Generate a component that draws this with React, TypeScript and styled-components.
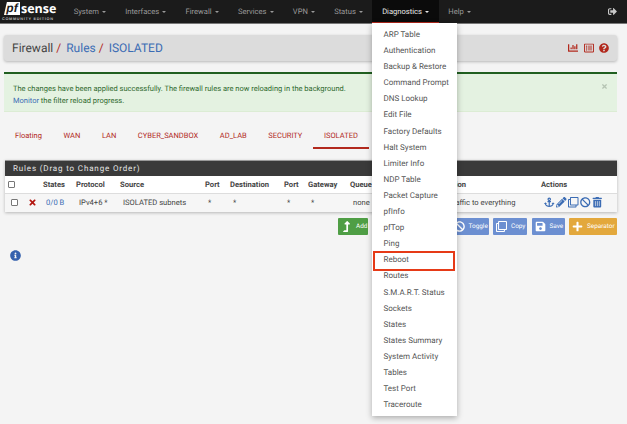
import React from "react";
import styled, { createGlobalStyle } from "styled-components";
import {
  FaAnchor,
  FaBan,
  FaChartBar,
  FaInfoCircle,
  FaPencilAlt,
  FaPlus,
  FaQuestionCircle,
  FaRegClone,
  FaRegListAlt,
  FaSave,
  FaSignOutAlt,
  FaTimes,
  FaTrashAlt,
  FaLevelUpAlt,
} from "react-icons/fa";

const RED = "#b2291d";
const BLUE = "#3b6cb4";

const GlobalStyle = createGlobalStyle`
  html, body {
    margin: 0;
    padding: 0;
    width: 627px;
    height: 424px;
    overflow: hidden;
    background: #f4f4f4;
    font-family: Roboto, "Liberation Sans", sans-serif;
    font-size: 8px;
    color: #444;
    text-rendering: geometricPrecision;
  }
  * { box-sizing: border-box; }
`;

const Navbar = styled.nav`
  height: 24px;
  background: #1b1b1b;
  border-bottom: 1px solid #777;
  display: flex;
  align-items: stretch;
  position: relative;
  z-index: 5;
`;

const Logo = styled.div`
  width: 64px;
  padding: 2px 0 0 2px;
  color: #fff;
`;

const LogoTop = styled.div`
  display: flex;
  align-items: center;
  height: 13px;
`;

const LogoPf = styled.span`
  background: #fff;
  color: #1b1b1b;
  font: italic 700 12px/13px "Liberation Sans", sans-serif;
  width: 16px;
  height: 13px;
  margin-left: 2px;
  text-align: center;
  clip-path: polygon(18% 0, 100% 0, 100% 100%, 0 100%);
`;

const LogoSense = styled.span`
  font: 700 12.5px/13px "Open Sans", sans-serif;
  margin-left: 1px;
`;

const LogoEdition = styled.div`
  font: 700 3.8px/5px "Liberation Sans", sans-serif;
  letter-spacing: 0.7px;
  color: #bbb;
  white-space: nowrap;
  margin-top: 2px;
`;

const NavList = styled.div`
  display: flex;
  flex: 1;
`;

const NavItem = styled.div<{ $active?: boolean }>`
  position: relative;
  padding: 0 9.65px;
  height: ${(p) => (p.$active ? "24px" : "23px")};
  display: flex;
  align-items: center;
  gap: 3px;
  color: ${(p) => (p.$active ? "#e8e8e8" : "#9a9a9a")};
  background: ${(p) => (p.$active ? "#0b0b0b" : "transparent")};
  border-bottom: ${(p) => (p.$active ? `2px solid ${RED}` : "none")};
  font-size: 7.6px;
  white-space: nowrap;
`;

const Caret = styled.span`
  width: 0;
  height: 0;
  margin-top: 1px;
  border-left: 2px solid transparent;
  border-right: 2px solid transparent;
  border-top: 2px solid currentColor;
`;

const LogoutIcon = styled.div`
  margin-left: auto;
  padding: 0 10px 0 0;
  display: flex;
  align-items: center;
  font-size: 9px;
  color: #c8c8c8;
`;

const Dropdown = styled.div`
  position: absolute;
  top: 23px;
  left: 0;
  width: 85px;
  height: 393px;
  padding-top: 4px;
  background: #fff;
  box-shadow: 0 2px 6px rgba(0, 0, 0, 0.3);
`;

const DropdownItem = styled.div`
  position: relative;
  height: 16.1px;
  padding-left: 11px;
  line-height: 16px;
  font-size: 8px;
  color: #555;
`;

const Highlight = styled.span`
  position: absolute;
  left: 1px;
  right: 2px;
  top: -1.5px;
  height: 20px;
  border: 2.5px solid #e63a17;
`;

const Page = styled.main`
  padding: 11px 10px 0 4px;
`;

const Breadcrumb = styled.header`
  height: 26px;
  padding: 0 8px;
  border-radius: 3px;
  background: #dcdcdc;
  box-shadow: 0 1px 3px rgba(0, 0, 0, 0.25);
  display: flex;
  align-items: center;
  font-size: 12px;
`;

const Crumb = styled.span<{ $link?: boolean }>`
  color: ${(p) => (p.$link ? BLUE : "#444")};
`;

const Slash = styled.span`
  color: ${RED};
  margin: 0 5px 0 3px;
`;

const CrumbIcons = styled.div`
  margin-left: auto;
  display: flex;
  align-items: center;
  gap: 5.5px;
  color: ${RED};
  font-size: 10px;
`;

const Alert = styled.section`
  margin-top: 11px;
  height: 40px;
  padding: 9px 9px 0 9px;
  background: #e4f2e1;
  border-top: 2px solid #205f20;
  border-bottom: 1px solid #dcecd4;
  color: #2f6a2f;
  font-size: 7.5px;
  line-height: 11.5px;
  display: flex;
  justify-content: space-between;
`;

const AlertLink = styled.span`
  color: ${BLUE};
`;

const AlertClose = styled.span`
  color: #b5c4b3;
  font-size: 7px;
`;

const Tabs = styled.div`
  display: flex;
  margin-top: 13px;
  height: 24px;
  padding-left: 0.2px;
`;

const Tab = styled.div<{ $active?: boolean }>`
  padding: 0 10.8px;
  line-height: 21px;
  font-size: 7.5px;
  color: ${RED};
  border-bottom: ${(p) => (p.$active ? `2px solid ${RED}` : "none")};
  height: 24px;
`;

const Panel = styled.section`
  margin-top: 11px;
  margin-left: 1px;
  background: #fff;
  border-top: 1px solid #999;
  box-shadow: 0 1px 3px rgba(0, 0, 0, 0.25);
`;

const PanelTitle = styled.h2`
  margin: 0;
  height: 15px;
  padding-left: 8px;
  background: #3a3a3a;
  color: #e4e4e4;
  font-size: 8px;
  font-weight: 400;
  letter-spacing: 0.85px;
  line-height: 15px;
`;

const gridColumns = "20px 15px 33px 44px 85px 25px 54px 24px 42px 38px 39px 114px 1fr";

const HeadRow = styled.div`
  display: grid;
  grid-template-columns: ${gridColumns};
  height: 17.5px;
  padding-left: 3px;
  align-items: center;
  background: #fff;
  border-bottom: 1px solid #ddd;
  font-size: 7.6px;
  font-weight: 700;
  color: #444;
  white-space: nowrap;
`;

const BodyRow = styled(HeadRow)`
  height: 18px;
  background: #f6f6f6;
  border-bottom: none;
  font-weight: 400;
  font-size: 7.6px;
`;

const BodyCell = styled.div<{ $blue?: boolean }>`
  padding-left: 3px;
  color: ${(p) => (p.$blue ? BLUE : "#444")};
  display: flex;
  align-items: center;
`;

const Check = styled.span`
  display: block;
  width: 6.5px;
  height: 6.5px;
  background: #fff;
  border: 1px solid #777;
  border-radius: 1px;
`;

const BlockX = styled(FaTimes)`
  color: #b3160f;
  font-size: 9px;
  margin-left: -3px;
`;

const ActionIcons = styled.div`
  display: flex;
  gap: 1.5px;
  align-items: center;
  color: ${BLUE};
  font-size: 10.5px;
  padding-left: 3px;
`;

const ButtonRow = styled.div`
  margin-top: 6px;
  display: flex;
  justify-content: flex-end;
  gap: 4.5px;
`;

const ActionButton = styled.div<{ $bg: string; $w: number }>`
  width: ${(p) => p.$w}px;
  height: 17.5px;
  padding-left: 3px;
  border-radius: 1px;
  display: flex;
  align-items: center;
  gap: 4px;
  background: ${(p) => p.$bg};
  color: #fff;
  font-size: 6.4px;
  white-space: nowrap;

  svg {
    font-size: 11px;
    flex-shrink: 0;
  }
`;

const InfoIcon = styled(FaInfoCircle)`
  display: block;
  margin: 15px 0 0 6px;
  color: #3561ad;
  font-size: 11px;
`;

const menuItems = [
  "ARP Table", "Authentication", "Backup & Restore", "Command Prompt", "DNS Lookup",
  "Edit File", "Factory Defaults", "Halt System", "Limiter Info", "NDP Table",
  "Packet Capture", "pfInfo", "pfTop", "Ping", "Reboot", "Routes", "S.M.A.R.T. Status",
  "Sockets", "States", "States Summary", "System Activity", "Tables", "Test Port", "Traceroute",
];

const navItems = ["System", "Interfaces", "Firewall", "Services", "VPN", "Status"];
const tabs = ["Floating", "WAN", "LAN", "CYBER_SANDBOX", "AD_LAB", "SECURITY", "ISOLATED"];
const headers = ["States", "Protocol", "Source", "Port", "Destination", "Port", "Gateway", "Queue", "Schedule", "Description", "Actions"];

const App: React.FC = () => {
  return (
    <>
      <GlobalStyle />
      <Navbar>
        <Logo>
          <LogoTop>
            <LogoPf>pf</LogoPf>
            <LogoSense>sense</LogoSense>
          </LogoTop>
          <LogoEdition>COMMUNITY EDITION</LogoEdition>
        </Logo>
        <NavList>
          {navItems.map((item) => (
            <NavItem key={item}>
              {item} <Caret />
            </NavItem>
          ))}
          <NavItem $active>
            Diagnostics <Caret />
            <Dropdown>
              {menuItems.map((item) => (
                <DropdownItem key={item}>
                  {item}
                  {item === "Reboot" && <Highlight />}
                </DropdownItem>
              ))}
            </Dropdown>
          </NavItem>
          <NavItem>
            Help <Caret />
          </NavItem>
        </NavList>
        <LogoutIcon>
          <FaSignOutAlt />
        </LogoutIcon>
      </Navbar>

      <Page>
        <Breadcrumb>
          <Crumb>Firewall</Crumb>
          <Slash>/</Slash>
          <Crumb $link>Rules</Crumb>
          <Slash>/</Slash>
          <Crumb $link>ISOLATED</Crumb>
          <CrumbIcons>
            <FaChartBar />
            <FaRegListAlt />
            <FaQuestionCircle />
          </CrumbIcons>
        </Breadcrumb>

        <Alert>
          <div>
            The changes have been applied successfully. The firewall rules are now reloading in the background.
            <br />
            <AlertLink>Monitor</AlertLink> the filter reload progress.
          </div>
          <AlertClose>
            <FaTimes />
          </AlertClose>
        </Alert>

        <Tabs>
          {tabs.map((tab) => (
            <Tab key={tab} $active={tab === "ISOLATED"}>
              {tab}
            </Tab>
          ))}
        </Tabs>

        <Panel>
          <PanelTitle>Rules (Drag to Change Order)</PanelTitle>
          <HeadRow>
            <Check />
            <span />
            {headers.map((h, i) => (
              <span key={i}>{h}</span>
            ))}
          </HeadRow>
          <BodyRow>
            <BodyCell>
              <Check />
            </BodyCell>
            <BodyCell>
              <BlockX />
            </BodyCell>
            <BodyCell $blue>0/0 B</BodyCell>
            <BodyCell>IPv4+6 *</BodyCell>
            <BodyCell>ISOLATED subnets</BodyCell>
            <BodyCell>*</BodyCell>
            <BodyCell>*</BodyCell>
            <BodyCell>*</BodyCell>
            <BodyCell>*</BodyCell>
            <BodyCell>none</BodyCell>
            <BodyCell />
            <BodyCell>Allow traffic to everything</BodyCell>
            <ActionIcons>
              <FaAnchor />
              <FaPencilAlt />
              <FaRegClone />
              <FaBan />
              <FaTrashAlt />
            </ActionIcons>
          </BodyRow>
        </Panel>

        <ButtonRow>
          <ActionButton $bg="#4f9e45" $w={30}>
            <FaLevelUpAlt /> Add
          </ActionButton>
          <ActionButton $bg="#4f9e45" $w={30}>
            <FaLevelUpAlt /> Add
          </ActionButton>
          <ActionButton $bg="#b2291d" $w={39}>
            <FaTrashAlt /> Delete
          </ActionButton>
          <ActionButton $bg="#6c8fd1" $w={38}>
            <FaBan /> Toggle
          </ActionButton>
          <ActionButton $bg="#6c8fd1" $w={34}>
            <FaRegClone /> Copy
          </ActionButton>
          <ActionButton $bg="#6c8fd1" $w={33}>
            <FaSave /> Save
          </ActionButton>
          <ActionButton $bg="#e3a83c" $w={48}>
            <FaPlus /> Separator
          </ActionButton>
        </ButtonRow>

        <InfoIcon />
      </Page>
    </>
  );
};

export default App;
